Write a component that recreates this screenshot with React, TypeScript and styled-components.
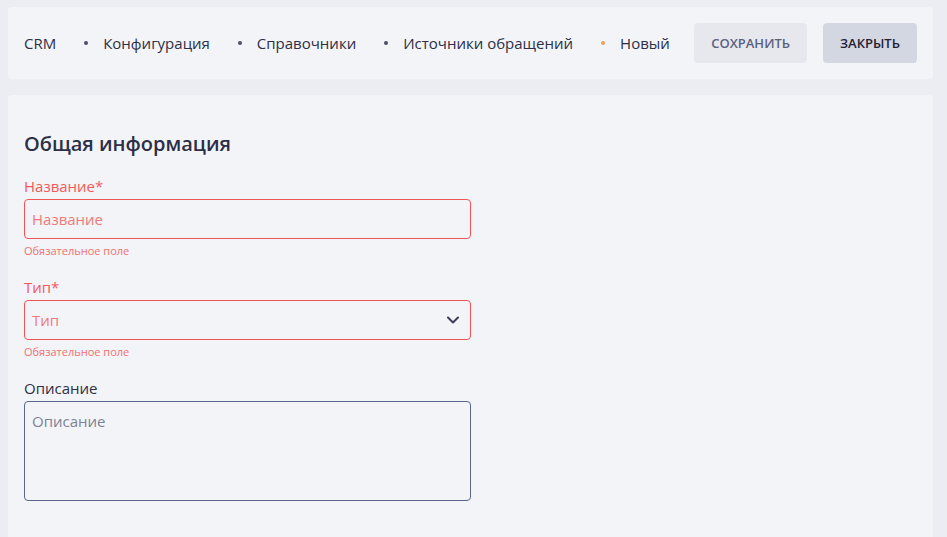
import React from "react";
import styled, { createGlobalStyle } from "styled-components";

const Global = createGlobalStyle`
  html, body { margin: 0; padding: 0; }
  body {
    background: #ecedf2;
    font-family: "Open Sans", "Noto Sans", sans-serif;
    color: #2c2f45;
    overflow: hidden;
  }
  * { box-sizing: border-box; }
`;

const Page = styled.div`
  display: flex;
  flex-direction: column;
  gap: 16px;
  padding: 7px 14px 0 8px;
  height: 537px;
`;

const TopBar = styled.header`
  display: flex;
  align-items: center;
  justify-content: space-between;
  height: 72px;
  padding: 0 16px;
  background: #f3f4f8;
  border-radius: 4px;
`;

const Crumbs = styled.nav`
  display: flex;
  align-items: center;
`;

const Crumb = styled.span`
  font-size: 15px;
  color: #2c2f45;
  white-space: nowrap;
`;

const Dot = styled.span<{ $active?: boolean }>`
  width: 4px;
  height: 4px;
  border-radius: 50%;
  background: ${(p) => (p.$active ? "#e9a063" : "#4a4e66")};
  margin: 0 15px 0 28px;
`;

const Actions = styled.div`
  display: flex;
  gap: 16px;
`;

const Button = styled.button<{ $primary?: boolean }>`
  height: 40px;
  padding: 0 17px;
  border: none;
  border-radius: 4px;
  font-family: inherit;
  font-size: 13px;
  font-weight: 600;
  text-transform: uppercase;
  background: ${(p) => (p.$primary ? "#d3d7e2" : "#e6e8ee")};
  color: ${(p) => (p.$primary ? "#1f2235" : "#5a6180")};
  cursor: pointer;
`;

const Card = styled.main`
  flex: 1;
  background: #f3f4f8;
  border-radius: 4px 4px 0 0;
  padding: 35px 16px 0;
`;

const Title = styled.h2`
  margin: 0 0 18px;
  font-size: 20px;
  font-weight: 600;
  line-height: 28px;
  color: #2c2f45;
`;

const Form = styled.div`
  display: flex;
  flex-direction: column;
  width: 447px;
`;

const Field = styled.div`
  display: flex;
  flex-direction: column;
  margin-bottom: 19px;
`;

const Label = styled.label<{ $error?: boolean }>`
  font-size: 15px;
  line-height: 20px;
  margin-bottom: 3px;
  color: ${(p) => (p.$error ? "#f25a5a" : "#2c2f45")};
`;

const Box = styled.div<{ $error?: boolean; $tall?: boolean }>`
  display: flex;
  align-items: ${(p) => (p.$tall ? "flex-start" : "center")};
  justify-content: space-between;
  height: ${(p) => (p.$tall ? "100px" : "40px")};
  padding: ${(p) => (p.$tall ? "9px 7px" : "0 10px 0 7px")};
  border: 1px solid ${(p) => (p.$error ? "#f25555" : "#5a6690")};
  border-radius: 4px;
  font-size: 15px;
  color: ${(p) => (p.$error ? "#f07a7a" : "#7d8296")};
`;

const Hint = styled.span`
  margin-top: 5px;
  font-size: 11px;
  line-height: 14px;
  color: #f07070;
`;

const Chevron = () => (
  <svg width="14" height="14" viewBox="0 0 14 14" fill="none">
    <path d="M2 4.5 L7 9.5 L12 4.5" stroke="#3a3d55" strokeWidth="2" strokeLinecap="round" strokeLinejoin="round" />
  </svg>
);

export default function App() {
  const crumbs = ["CRM", "Конфигурация", "Справочники", "Источники обращений", "Новый"];
  return (
    <>
      <Global />
      <Page>
        <TopBar>
          <Crumbs>
            {crumbs.map((c, i) => (
              <React.Fragment key={c}>
                {i > 0 && <Dot $active={i === crumbs.length - 1} />}
                <Crumb>{c}</Crumb>
              </React.Fragment>
            ))}
          </Crumbs>
          <Actions>
            <Button>Сохранить</Button>
            <Button $primary>Закрыть</Button>
          </Actions>
        </TopBar>
        <Card>
          <Title>Общая информация</Title>
          <Form>
            <Field>
              <Label $error>Название*</Label>
              <Box $error>Название</Box>
              <Hint>Обязательное поле</Hint>
            </Field>
            <Field>
              <Label $error>Тип*</Label>
              <Box $error>
                Тип
                <Chevron />
              </Box>
              <Hint>Обязательное поле</Hint>
            </Field>
            <Field>
              <Label>Описание</Label>
              <Box $tall>Описание</Box>
            </Field>
          </Form>
        </Card>
      </Page>
    </>
  );
}
